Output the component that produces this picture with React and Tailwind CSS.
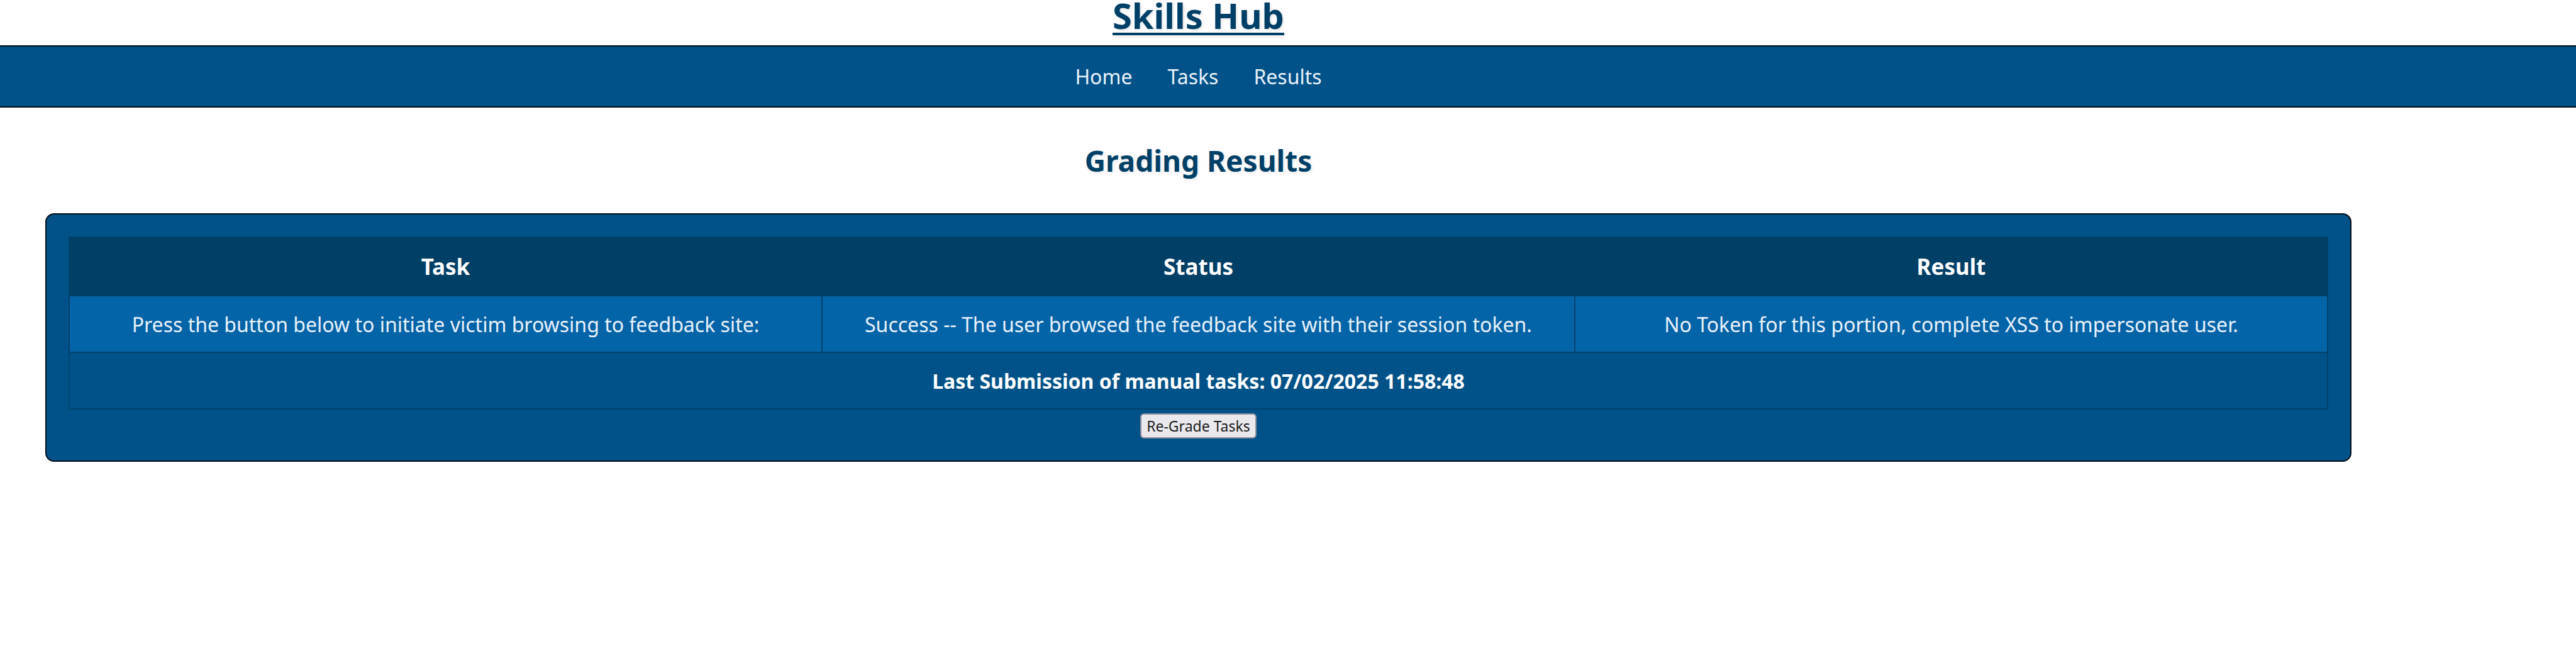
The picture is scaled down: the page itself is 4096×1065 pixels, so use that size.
const links = ["Home", "Tasks", "Results"];
const columns = ["Task", "Status", "Result"];
const rows = [
  [
    "Press the button below to initiate victim browsing to feedback site:",
    "Success -- The user browsed the feedback site with their session token.",
    "No Token for this portion, complete XSS to impersonate user.",
  ],
];

export default function App() {
  return (
    <div className="min-h-screen bg-white text-center font-['Noto_Sans',sans-serif] text-[32px] leading-[43px] text-white">
      <header>
        <div className="pr-[285px] pb-6">
          <h1 className="text-[56px] leading-[48px] font-bold text-[#003f66] underline decoration-4 underline-offset-[6px] text-shadow-[2px_2px_4px_rgba(0,0,0,0.1)]">
            Skills Hub
          </h1>
        </div>
        <nav className="flex justify-center gap-14 border-y-2 border-[#020c15] bg-[#005288] py-[26px] pr-[285px]">
          {links.map((label) => (
            <a key={label} href="#" className="text-[#e8f2fa]">
              {label}
            </a>
          ))}
        </nav>
      </header>

      <main className="pr-[357px] pl-[72px]">
        <h2 className="py-[53px] text-[46px] leading-[62px] font-bold text-[#003f66] text-shadow-[2px_2px_4px_rgba(0,0,0,0.1)]">
          Grading Results
        </h2>
        <section className="rounded-[14px] border-2 border-[#020c15] bg-[#005288] p-[35px]">
          <table className="w-full table-fixed border-collapse">
            <thead>
              <tr className="h-[93px] bg-[#003f66] text-[35px]">
                {columns.map((name) => (
                  <th key={name} scope="col" className="border-2 border-[#003f66] font-bold">
                    {name}
                  </th>
                ))}
              </tr>
            </thead>
            <tbody>
              {rows.map((cells) => (
                <tr key={cells[0]} className="h-[90px] bg-[#0464a8] text-[#e8f2fa]">
                  {cells.map((cell) => (
                    <td key={cell} className="border-2 border-[#00436e]">
                      {cell}
                    </td>
                  ))}
                </tr>
              ))}
              <tr className="h-[90px]">
                <th colSpan={3} className="border-2 border-[#00436e] font-bold">
                  Last Submission of manual tasks: 07/02/2025 11:58:48
                </th>
              </tr>
            </tbody>
          </table>
          <div className="mt-1.5 flex justify-center">
            <button
              type="button"
              className="h-10 rounded-md border-2 border-[#8f8f9d] bg-[#e9e9ed] px-2 text-[23px] leading-9 text-[#1c1c1c]"
            >
              Re-Grade Tasks
            </button>
          </div>
        </section>
      </main>
    </div>
  );
}
